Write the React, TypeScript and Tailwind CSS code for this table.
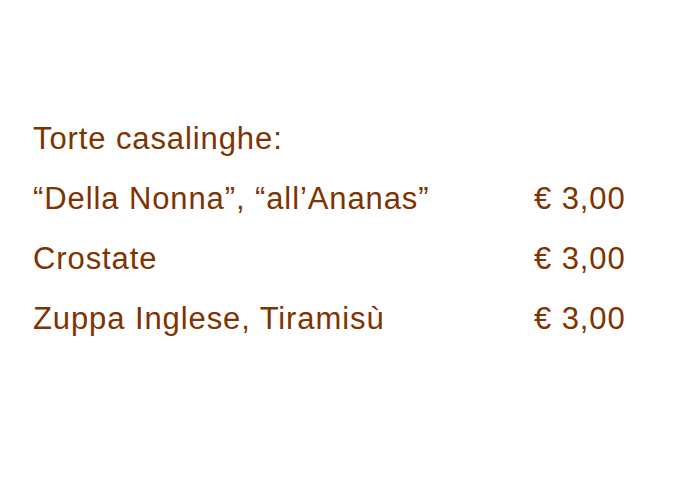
export default function App() {
  const rows = [
    { name: "Torte casalinghe:", price: "" },
    { name: "\u201cDella Nonna\u201d, \u201call\u2019Ananas\u201d", price: "€ 3,00" },
    { name: "Crostate", price: "€ 3,00" },
    { name: "Zuppa Inglese, Tiramisù", price: "€ 3,00" },
  ];
  return (
    <div className="w-[700px] h-[500px] bg-white pt-[109px] pl-[33px] font-['Liberation_Sans',Arial,sans-serif] text-[31px] leading-[60px] tracking-[0.9px] text-[#7f3300]">
      {rows.map((r, i) => (
        <div key={i} className="grid grid-cols-[501px_auto]">
          <span className="whitespace-nowrap">{r.name}</span>
          <span className="whitespace-nowrap">{r.price}</span>
        </div>
      ))}
    </div>
  );
}
